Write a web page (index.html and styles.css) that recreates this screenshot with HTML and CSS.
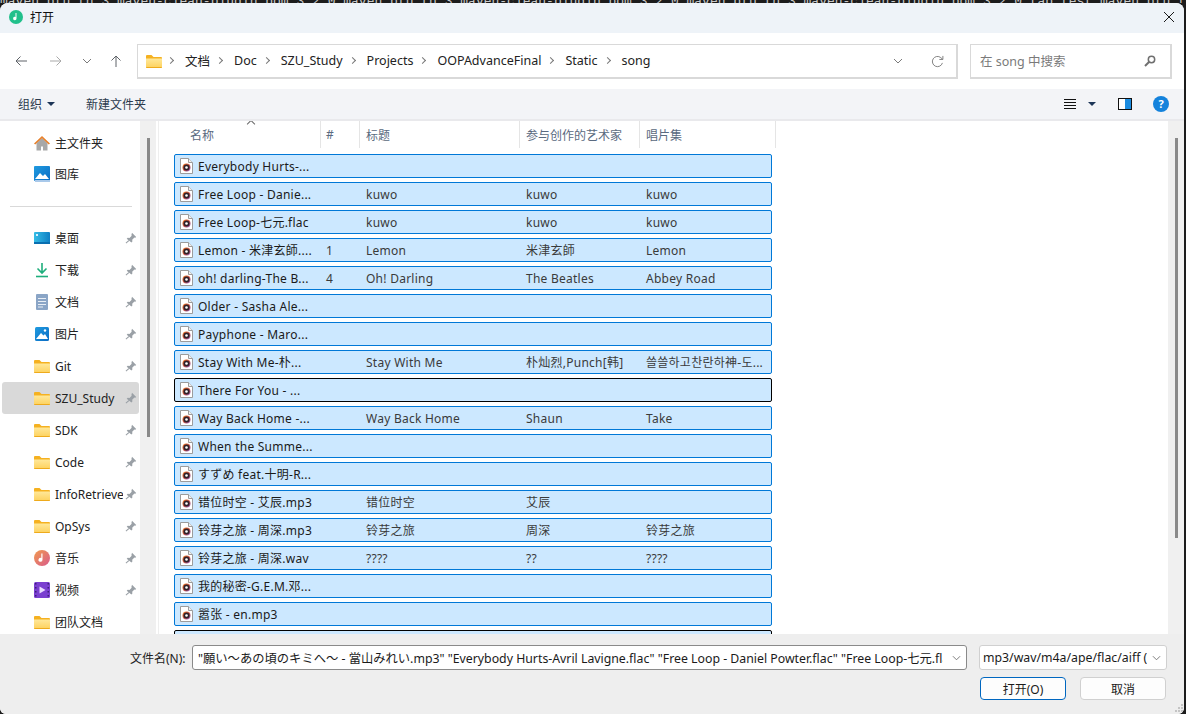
FILE: index.html
```html
<!DOCTYPE html>
<html lang="zh-CN">
<head>
    <meta charset="UTF-8">
    <title>打开</title>
    <link rel="stylesheet" href="styles.css">
</head>
<body>

<svg class="defs" width="0" height="0">
    <defs>
        <linearGradient id="folderFill" x1="0" y1="0" x2="0" y2="1">
            <stop offset="0" stop-color="#ffe89a"/>
            <stop offset="1" stop-color="#fdd15c"/>
        </linearGradient>
        <linearGradient id="blueFill" x1="0" y1="0" x2="1" y2="1">
            <stop offset="0" stop-color="#1f9be0"/>
            <stop offset="1" stop-color="#0b6cc4"/>
        </linearGradient>
        <linearGradient id="deskFill" x1="0" y1="0" x2="1" y2="0">
            <stop offset="0" stop-color="#35bde6"/>
            <stop offset="1" stop-color="#0f7fc4"/>
        </linearGradient>
        <linearGradient id="musicFill" x1="0" y1="0" x2="1" y2="1">
            <stop offset="0" stop-color="#f09a4e"/>
            <stop offset="1" stop-color="#d95b8c"/>
        </linearGradient>
        <linearGradient id="discRing" x1="0" y1="0" x2="1" y2="1">
            <stop offset="0" stop-color="#f07a20"/>
            <stop offset=".55" stop-color="#c4504a"/>
            <stop offset="1" stop-color="#8a5cc8"/>
        </linearGradient>
        <symbol id="folder" viewBox="0 0 16 14">
            <path d="M0 2a1 1 0 0 1 1-1h4.500l2 2H15a1 1 0 0 1 1 1v1H0z" fill="#f5b120"/>
            <path d="M0 4.500h16V13a1 1 0 0 1-1 1H1a1 1 0 0 1-1-1z" fill="url(#folderFill)"/>
            <path d="M0 13h16a1 1 0 0 1-1 1H1a1 1 0 0 1-1-1z" fill="#eeaa1c"/>
        </symbol>
        <symbol id="pin" viewBox="0 0 12 12">
            <path d="M7 .8l4.200 4.200-1 .8-.8-.3-2.200 2.200.2 1.800-1 1L1.700 6.800l1-1 1.800.2 2.200-2.200-.3-.8zM3.400 8.200l.8.800L1.200 11.400.6 10.800z" fill="#9aa0a6"/>
        </symbol>
        <symbol id="song" viewBox="0 0 13 16">
            <path d="M.5.500h8l4 4v11H.5z" fill="#fff" stroke="#9c9c9c"/>
            <path d="M8.500.500v4h4" fill="#efefef" stroke="#9c9c9c"/>
            <circle cx="6.500" cy="9.500" r="4" fill="url(#discRing)"/>
            <circle cx="6.500" cy="9.500" r="3" fill="#2e2029"/>
            <circle cx="6.500" cy="9.500" r="1.300" fill="#fff"/>
        </symbol>
    </defs>
</svg>

<div class="behind">maven:bfu.tn:3.maven-clean-plugin:bom:3.2.0 maven:bfu.tn:3.maven-clean-plugin:bom:3.2.0 maven:bfu.tn:3.maven-clean-plugin:bom:3.2.0 tab:test maven:bfu.tn:3.maven-clean-plugin:bom:3.2.0 tab:test</div>

<div class="dialog">
    <div class="titlebar">
        <svg class="app-icon" viewBox="0 0 14 14"><circle cx="7" cy="7" r="7" fill="#21c08b"/><path d="M7.500 3v5.400a1.700 1.700 0 1 1-1-1.500V3z" fill="#fff"/></svg>
        <span class="title">打开</span>
        <svg class="close" viewBox="0 0 10 10"><path d="M0 0l10 10M10 0L0 10" stroke="#1a1a1a" stroke-width="1" fill="none"/></svg>
    </div>

    <div class="navbar">
        <div class="nav-buttons">
            <svg class="nav-arrow" viewBox="0 0 12 12"><path d="M12 6H1M5.500 1.500L1 6l4.500 4.500" stroke="#5f6368" fill="none"/></svg>
            <svg class="nav-arrow off" viewBox="0 0 12 12"><path d="M0 6h11M6.500 1.500L11 6l-4.500 4.500" stroke="#a9a9a9" fill="none"/></svg>
            <svg class="nav-down" viewBox="0 0 10 6"><path d="M1 1l4 4 4-4" stroke="#7a7a7a" fill="none"/></svg>
            <svg class="nav-arrow" viewBox="0 0 12 12"><path d="M6 12V1M1.500 5.500L6 1l4.500 4.500" stroke="#5f6368" fill="none"/></svg>
        </div>
        <div class="address">
            <svg class="address-folder"><use href="#folder"/></svg>
            <span class="crumb-sep"></span><span>文档</span>
            <span class="crumb-sep"></span><span>Doc</span>
            <span class="crumb-sep"></span><span>SZU_Study</span>
            <span class="crumb-sep"></span><span>Projects</span>
            <span class="crumb-sep"></span><span>OOPAdvanceFinal</span>
            <span class="crumb-sep"></span><span>Static</span>
            <span class="crumb-sep"></span><span>song</span>
            <svg class="address-down" viewBox="0 0 10 6"><path d="M1 1l4 4 4-4" stroke="#7a7a7a" fill="none"/></svg>
            <svg class="refresh" viewBox="0 0 14 14"><path d="M12.300 8.500A5.500 5.500 0 1 1 10.500 2.800L12.500 4.500M12.800 1v3.800H9" stroke="#7a7a7a" fill="none"/></svg>
        </div>
        <div class="search">
            <span>在 song 中搜索</span>
            <svg class="search-icon" viewBox="0 0 12 12"><circle cx="7.500" cy="4.500" r="3.200" fill="none" stroke="#6f6f6f" stroke-width="1.500"/><path d="M5 7l-4 4" stroke="#6f6f6f" stroke-width="2"/></svg>
        </div>
    </div>

    <div class="toolbar">
        <span class="tool">组织</span>
        <span class="caret"></span>
        <span class="tool new-folder">新建文件夹</span>
        <div class="toolbar-right">
            <svg class="view-icon" viewBox="0 0 12 10"><path d="M0 .5h12M0 3.500h12M0 6.500h12M0 9.500h12" stroke="#111"/></svg>
            <span class="caret view-caret"></span>
            <span class="pane-icon"></span>
            <span class="help-icon">?</span>
        </div>
    </div>

    <div class="main">
        <nav class="sidebar">
            <div class="nav-item">
                <svg class="nav-icon" viewBox="0 0 16 16"><path d="M2.500 8v7.500H7v-4h2v4h4.500V8L8 3z" fill="#a8a8a8"/><path d="M0 8.500L8 1l8 7.500-1.200 1L8 3.300 1.200 9.500z" fill="#e8812c"/></svg>
                <span class="nav-label">主文件夹</span>
            </div>
            <div class="nav-item gallery">
                <svg class="nav-icon" viewBox="0 0 16 16"><rect width="16" height="15" rx="1" fill="url(#blueFill)"/><path d="M1 13l5-6 3 3 2-2 4 5z" fill="#fff"/><rect x="1" y="14" width="15" height="2" fill="#a9c9ea"/></svg>
                <span class="nav-label">图库</span>
            </div>
            <div class="nav-divider"></div>
            <div class="nav-item">
                <svg class="nav-icon" viewBox="0 0 16 14"><rect y="1" width="16" height="12" rx="1" fill="url(#deskFill)"/><rect y="11" width="16" height="2" fill="#0a6fb0"/><rect x="2" y="3" width="2" height="2" fill="#d6f0ff"/></svg>
                <span class="nav-label">桌面</span>
                <svg class="pin"><use href="#pin"/></svg>
            </div>
            <div class="nav-item">
                <svg class="nav-icon" viewBox="0 0 16 16"><path d="M8 1v9M3.500 6.500L8 11l4.500-4.500" stroke="#1fae7c" stroke-width="1.600" fill="none"/><path d="M2 14.500h12" stroke="#1fae7c" stroke-width="1.600"/></svg>
                <span class="nav-label">下载</span>
                <svg class="pin"><use href="#pin"/></svg>
            </div>
            <div class="nav-item">
                <svg class="nav-icon" viewBox="0 0 16 16"><rect x="2" width="12" height="16" rx="1" fill="#8aa5c6"/><path d="M4 4.500h8M4 7.500h8M4 10.500h8M4 13h5" stroke="#e8eef5"/></svg>
                <span class="nav-label">文档</span>
                <svg class="pin"><use href="#pin"/></svg>
            </div>
            <div class="nav-item">
                <svg class="nav-icon" viewBox="0 0 16 16"><rect x="1" y="1" width="14" height="14" rx="1.500" fill="url(#blueFill)"/><path d="M2 13l5-6 2.500 2.500L11 8l3 5z" fill="#fff"/><circle cx="11" cy="4.500" r="1.200" fill="#fff"/></svg>
                <span class="nav-label">图片</span>
                <svg class="pin"><use href="#pin"/></svg>
            </div>
            <div class="nav-item">
                <svg class="nav-icon"><use href="#folder"/></svg>
                <span class="nav-label">Git</span>
                <svg class="pin"><use href="#pin"/></svg>
            </div>
            <div class="nav-item selected">
                <svg class="nav-icon"><use href="#folder"/></svg>
                <span class="nav-label">SZU_Study</span>
                <svg class="pin"><use href="#pin"/></svg>
            </div>
            <div class="nav-item">
                <svg class="nav-icon"><use href="#folder"/></svg>
                <span class="nav-label">SDK</span>
                <svg class="pin"><use href="#pin"/></svg>
            </div>
            <div class="nav-item">
                <svg class="nav-icon"><use href="#folder"/></svg>
                <span class="nav-label">Code</span>
                <svg class="pin"><use href="#pin"/></svg>
            </div>
            <div class="nav-item">
                <svg class="nav-icon"><use href="#folder"/></svg>
                <span class="nav-label">InfoRetrieve</span>
                <svg class="pin"><use href="#pin"/></svg>
            </div>
            <div class="nav-item">
                <svg class="nav-icon"><use href="#folder"/></svg>
                <span class="nav-label">OpSys</span>
                <svg class="pin"><use href="#pin"/></svg>
            </div>
            <div class="nav-item">
                <svg class="nav-icon" viewBox="0 0 16 16"><circle cx="8" cy="8" r="8" fill="url(#musicFill)"/><path d="M8.500 3.500v6.300a2 2 0 1 1-1.200-1.800V3.500z" fill="#fff"/></svg>
                <span class="nav-label">音乐</span>
                <svg class="pin"><use href="#pin"/></svg>
            </div>
            <div class="nav-item">
                <svg class="nav-icon" viewBox="0 0 16 16"><rect width="16" height="16" rx="1.500" fill="#7a3fd0"/><path d="M1 1h1.500v1.500H1zM1 5h1.500v1.500H1zM1 9h1.500v1.500H1zM1 13h1.500v1.500H1zM13.500 1H15v1.500h-1.500zM13.500 5H15v1.500h-1.500zM13.500 9H15v1.500h-1.500zM13.500 13H15v1.500h-1.500z" fill="#3c1f78"/><path d="M5.500 4.500l6 3.500-6 3.500z" fill="#e9dcff"/></svg>
                <span class="nav-label">视频</span>
                <svg class="pin"><use href="#pin"/></svg>
            </div>
            <div class="nav-item">
                <svg class="nav-icon"><use href="#folder"/></svg>
                <span class="nav-label">团队文档</span>
            </div>
        </nav>
        <div class="scrollbar"><div class="thumb side-thumb"></div></div>

        <div class="files">
            <div class="columns">
                <div class="col col-name">名称<span class="sort-caret"></span></div>
                <div class="col col-num">#</div>
                <div class="col col-title">标题</div>
                <div class="col col-artist">参与创作的艺术家</div>
                <div class="col col-album">唱片集</div>
            </div>
            <div class="rows">
                <div class="row"><svg class="song-icon"><use href="#song"/></svg><span class="name">Everybody Hurts-...</span><span></span><span></span><span></span><span></span></div>
                <div class="row"><svg class="song-icon"><use href="#song"/></svg><span class="name">Free Loop - Danie...</span><span></span><span>kuwo</span><span>kuwo</span><span>kuwo</span></div>
                <div class="row"><svg class="song-icon"><use href="#song"/></svg><span class="name">Free Loop-七元.flac</span><span></span><span>kuwo</span><span>kuwo</span><span>kuwo</span></div>
                <div class="row"><svg class="song-icon"><use href="#song"/></svg><span class="name">Lemon - 米津玄師....</span><span>1</span><span>Lemon</span><span>米津玄師</span><span>Lemon</span></div>
                <div class="row"><svg class="song-icon"><use href="#song"/></svg><span class="name">oh! darling-The B...</span><span>4</span><span>Oh! Darling</span><span>The Beatles</span><span>Abbey Road</span></div>
                <div class="row"><svg class="song-icon"><use href="#song"/></svg><span class="name">Older - Sasha Ale...</span><span></span><span></span><span></span><span></span></div>
                <div class="row"><svg class="song-icon"><use href="#song"/></svg><span class="name">Payphone - Maro...</span><span></span><span></span><span></span><span></span></div>
                <div class="row"><svg class="song-icon"><use href="#song"/></svg><span class="name">Stay With Me-朴...</span><span></span><span>Stay With Me</span><span>朴灿烈,Punch[韩]</span><span>쓸쓸하고찬란하神-도...</span></div>
                <div class="row focused"><svg class="song-icon"><use href="#song"/></svg><span class="name">There For You - ...</span><span></span><span></span><span></span><span></span></div>
                <div class="row"><svg class="song-icon"><use href="#song"/></svg><span class="name">Way Back Home -...</span><span></span><span>Way Back Home</span><span>Shaun</span><span>Take</span></div>
                <div class="row"><svg class="song-icon"><use href="#song"/></svg><span class="name">When the Summe...</span><span></span><span></span><span></span><span></span></div>
                <div class="row"><svg class="song-icon"><use href="#song"/></svg><span class="name">すずめ feat.十明-R...</span><span></span><span></span><span></span><span></span></div>
                <div class="row"><svg class="song-icon"><use href="#song"/></svg><span class="name">错位时空 - 艾辰.mp3</span><span></span><span>错位时空</span><span>艾辰</span><span></span></div>
                <div class="row"><svg class="song-icon"><use href="#song"/></svg><span class="name">铃芽之旅 - 周深.mp3</span><span></span><span>铃芽之旅</span><span>周深</span><span>铃芽之旅</span></div>
                <div class="row"><svg class="song-icon"><use href="#song"/></svg><span class="name">铃芽之旅 - 周深.wav</span><span></span><span>????</span><span>??</span><span>????</span></div>
                <div class="row"><svg class="song-icon"><use href="#song"/></svg><span class="name">我的秘密-G.E.M.邓...</span><span></span><span></span><span></span><span></span></div>
                <div class="row"><svg class="song-icon"><use href="#song"/></svg><span class="name">嚣张 - en.mp3</span><span></span><span></span><span></span><span></span></div>
                <div class="row focused"><svg class="song-icon"><use href="#song"/></svg><span class="name"></span><span></span><span></span><span></span><span></span></div>
            </div>
        </div>
        <div class="scrollbar"><div class="thumb list-thumb"></div></div>
    </div>

    <div class="footer">
        <div class="file-row">
            <label class="file-label" for="fileName">文件名(N):</label>
            <div class="combo file-combo">
                <span class="combo-text" id="fileName">"願い〜あの頃のキミへ〜 - 當山みれい.mp3" "Everybody Hurts-Avril Lavigne.flac" "Free Loop - Daniel Powter.flac" "Free Loop-七元.flac"</span>
                <svg class="combo-down" viewBox="0 0 10 6"><path d="M1 1l4 4 4-4" stroke="#6f6f6f" fill="none"/></svg>
            </div>
            <div class="combo filter-combo">
                <span class="combo-text">mp3/wav/m4a/ape/flac/aiff (*.mp3;*.wav)</span>
                <svg class="combo-down" viewBox="0 0 10 6"><path d="M1 1l4 4 4-4" stroke="#6f6f6f" fill="none"/></svg>
            </div>
        </div>
        <div class="button-row">
            <button class="btn primary">打开(O)</button>
            <button class="btn">取消</button>
        </div>
        <svg class="grip" viewBox="0 0 9 9"><path d="M7 0h2v2H7zM4 3h2v2H4zM7 3h2v2H7zM1 6h2v2H1zM4 6h2v2H4zM7 6h2v2H7z" fill="#c4c4c4"/></svg>
    </div>
</div>

</body>
</html>
```

FILE: styles.css
```css
* {
    box-sizing: border-box;
}
html, body {
    height: 100%;
}
body {
    margin: 0;
    background-color: #1c1c1c;
    font-family: "Noto Sans", "Noto Sans CJK SC", sans-serif;
    font-size: 12px;
    color: #1a1a1a;
    overflow: hidden;
}
.defs {
    position: absolute;
}
.behind {
    height: 3px;
    overflow: hidden;
    white-space: nowrap;
    font-family: "Liberation Mono", monospace;
    font-size: 13px;
    line-height: 3px;
    color: #c8c8c8;
}
.dialog {
    width: 1184px;
    height: 711px;
    display: flex;
    flex-direction: column;
    background-color: #fff;
    border-radius: 8px 8px 6px 6px;
    overflow: hidden;
}

/* title bar */
.titlebar {
    height: 30px;
    flex: none;
    display: flex;
    align-items: center;
    padding: 0 10px 2px 9px;
    background-color: #eef3f8;
}
.app-icon {
    width: 14px;
    height: 14px;
    margin-right: 7px;
}
.title {
    font-size: 12px;
    color: #111;
}
.close {
    width: 10px;
    height: 10px;
    margin-left: auto;
}

/* back / forward and address */
.navbar {
    height: 56px;
    flex: none;
    display: flex;
    align-items: center;
    background-color: #fff;
}
.nav-buttons {
    width: 137px;
    display: flex;
    align-items: center;
    padding-left: 15px;
}
.nav-arrow {
    width: 12px;
    height: 12px;
}
.nav-arrow.off {
    margin-left: 23px;
}
.nav-down {
    width: 10px;
    height: 6px;
    margin: 0 18px 0 20px;
}
.address {
    width: 821px;
    height: 35px;
    display: flex;
    align-items: center;
    gap: 10px;
    padding-left: 8px;
    border: 1px solid #d9d9d9;
    border-bottom-width: 2px;
    border-right-width: 2px;
    font-size: 12.500px;
    color: #222;
}
.address-folder {
    width: 16px;
    height: 14px;
    margin-right: -1px;
}
.crumb-sep {
    width: 5px;
    height: 5px;
    margin-left: -3px;
    margin-right: 2px;
    border-top: 1px solid #777;
    border-right: 1px solid #777;
    transform: rotate(45deg);
}
.address-down {
    width: 10px;
    height: 6px;
    margin-left: auto;
}
.refresh {
    width: 13px;
    height: 13px;
    margin: 2px 12px 0 18px;
}
.search {
    width: 202px;
    height: 35px;
    margin-left: 12px;
    display: flex;
    align-items: center;
    justify-content: space-between;
    padding: 0 14px 0 9px;
    border: 1px solid #d9d9d9;
    border-bottom-width: 2px;
    border-right-width: 2px;
    font-size: 12.500px;
    color: #7a7a7a;
}
.search-icon {
    width: 12px;
    height: 12px;
}

/* toolbar */
.toolbar {
    height: 32px;
    flex: none;
    display: flex;
    align-items: center;
    padding-left: 18px;
    background-color: #f3f4f7;
    border-bottom: 2px solid #e9e9ec;
}
.tool {
    color: #2b3a4d;
}
.new-folder {
    margin-left: 31px;
}
.caret {
    width: 0;
    height: 0;
    margin-left: 5px;
    border-left: 4px solid transparent;
    border-right: 4px solid transparent;
    border-top: 4px solid #1d3557;
}
.toolbar-right {
    margin-left: auto;
    width: 120px;
    display: flex;
    align-items: center;
}
.view-icon {
    width: 12px;
    height: 10px;
}
.view-caret {
    margin-left: 12px;
}
.pane-icon {
    width: 14px;
    height: 12px;
    margin-left: 22px;
    border: 1px solid #111;
    background: linear-gradient(to right, #fff 50%, #1c8ce0 50%);
}
.help-icon {
    width: 16px;
    height: 16px;
    margin-left: 21px;
    border-radius: 50%;
    background-color: #1482dc;
    color: #fff;
    font-size: 11px;
    font-weight: bold;
    line-height: 16px;
    text-align: center;
}

/* main area */
.main {
    flex: 1;
    min-height: 0;
    display: flex;
}
.sidebar {
    width: 140px;
    flex: none;
    padding: 6px 0 0 2px;
    overflow: hidden;
}
.nav-item {
    width: 137px;
    height: 32px;
    display: flex;
    align-items: center;
    padding-left: 32px;
    padding-right: 3px;
    border-radius: 3px;
    white-space: nowrap;
}
.nav-item.gallery {
    margin-top: -1px;
}
.nav-item.selected {
    background-color: #d9d9d9;
}
.nav-icon {
    width: 16px;
    height: 16px;
    flex: none;
    margin-right: 5px;
}
.nav-label {
    width: 68px;
    overflow: hidden;
    flex: none;
    color: #222;
}
.pin {
    width: 12px;
    height: 12px;
    flex: none;
    margin-left: 2px;
}
.nav-divider {
    height: 1px;
    margin: 16px 8px 15px 8px;
    background-color: #d9d9d9;
}
.scrollbar {
    width: 16px;
    flex: none;
    padding: 17px 7px 0 7px;
    background-color: #f0f0f0;
}
.thumb {
    width: 2.500px;
    background-color: #8a8a8a;
}
.side-thumb {
    height: 299px;
}
.list-thumb {
    height: 400px;
}
.files {
    flex: 1;
    min-width: 0;
    margin-left: 2px;
    border-left: 1px solid #eee;
    overflow: hidden;
}
.columns {
    height: 27px;
    display: flex;
    color: #5a6a80;
}
.col {
    padding: 5px 0 0 6px;
    border-right: 1px solid #e5e5e5;
    white-space: nowrap;
}
.col-name {
    position: relative;
    width: 162px;
    margin-right: -1px;
    padding-left: 31px;
}
.col-num {
    width: 40px;
}
.col-title {
    width: 160px;
}
.col-artist {
    width: 120px;
}
.col-album {
    width: 136px;
}
.sort-caret {
    position: absolute;
    left: 89px;
    top: 0;
    width: 6px;
    height: 6px;
    border-top: 1px solid #666;
    border-left: 1px solid #666;
    transform: rotate(45deg);
}
.rows {
    padding: 6px 0 0 15px;
}
.row {
    width: 598px;
    height: 24px;
    margin-bottom: 4px;
    display: grid;
    grid-template-columns: 23px 122px 40px 160px 120px 1fr;
    align-items: center;
    background-color: #cce8ff;
    border: 1px solid #0078d7;
    border-radius: 2px;
    color: #3a3a3a;
    letter-spacing: .25px;
    white-space: nowrap;
}
.row.focused {
    border-color: #000;
}
.row span {
    padding-left: 6px;
    overflow: hidden;
}
.row .name {
    padding-left: 0;
    color: #1a1a1a;
}
.song-icon {
    width: 13px;
    height: 16px;
    margin-left: 5px;
}

/* bottom part */
.footer {
    position: relative;
    height: 80px;
    flex: none;
    padding-top: 11px;
    background-color: #eee;
}
.file-row {
    display: flex;
    align-items: center;
    padding-left: 130px;
}
.file-label {
    width: 62px;
    color: #222;
}
.combo {
    height: 25px;
    display: flex;
    align-items: center;
    background-color: #fff;
    border: 1px solid #8a8a8a;
    border-radius: 3px;
    padding-left: 5px;
}
.file-combo {
    width: 775px;
}
.file-combo .combo-down {
    margin-left: 9px;
}
.filter-combo {
    width: 188px;
    margin-left: 12px;
    padding-left: 3px;
    border-color: #d0d0d0;
}
.combo-text {
    flex: 1;
    min-width: 0;
    overflow: hidden;
    white-space: nowrap;
    font-size: 12.300px;
}
.combo-down {
    width: 9px;
    height: 6px;
    flex: none;
    margin: 0 5px 0 5px;
}
.button-row {
    display: flex;
    gap: 14px;
    margin-top: 7px;
    padding-left: 980px;
}
.btn {
    width: 86px;
    height: 23px;
    padding: 0;
    background-color: #fdfdfd;
    border: 1px solid #d0d0d0;
    border-radius: 4px;
    font-family: inherit;
    font-size: 12px;
    color: #1a1a1a;
}
.btn.primary {
    border-color: #0067c0;
}
.grip {
    position: absolute;
    right: 1px;
    bottom: 1px;
    width: 9px;
    height: 9px;
}
```
